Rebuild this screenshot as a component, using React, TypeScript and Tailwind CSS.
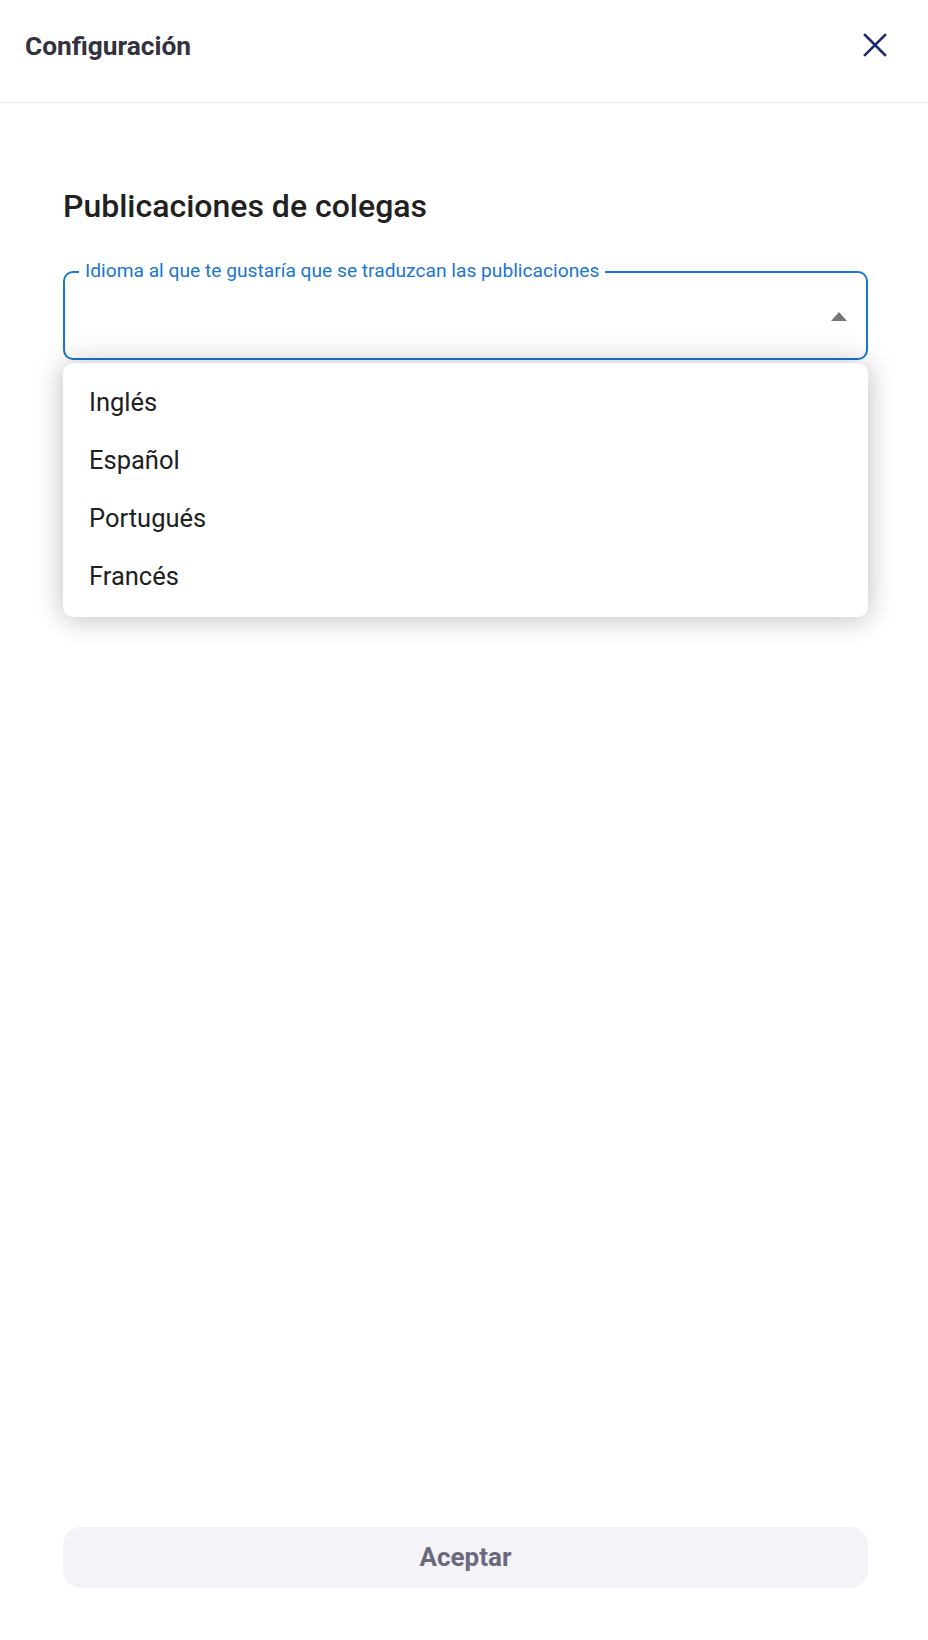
import React from "react";

export default function App() {
  const items = ["Inglés", "Español", "Portugués", "Francés"];
  return (
    <div
      className="w-[928px] h-[1640px] bg-white flex flex-col"
      style={{ fontFamily: "Roboto, 'Noto Sans', sans-serif" }}
    >
      <header className="h-[103px] shrink-0 border-b border-[#e9e9ef] flex items-center justify-between pl-[25px] pr-[41px]">
        <h1 className="text-[26.3px] font-bold text-[#33323e] leading-none -mt-[10px]">Configuración</h1>
        <button className="-mt-[13px] text-[#1f2b6f]" aria-label="Cerrar">
          <svg width="24" height="24" viewBox="0 0 24 24" fill="none" stroke="currentColor" strokeWidth="2.6" strokeLinecap="square">
            <path d="M2 2 L22 22 M22 2 L2 22" />
          </svg>
        </button>
      </header>

      <main className="flex-1 flex flex-col pl-[63px] pr-[60px]">
        <h2 className="mt-[85px] text-[32px] font-medium text-[#212121] leading-[36px]">Publicaciones de colegas</h2>

        <div className="relative mt-[47px]">
          <div className="relative h-[89px] rounded-[10px] border-[2.5px] border-[#1976d2] flex items-center justify-end pr-[19px]">
            <span className="absolute -top-[13px] left-[14px] bg-white px-[6px] text-[19.2px] leading-[22px] text-[#1976d2]">
              Idioma al que te gustaría que se traduzcan las publicaciones
            </span>
            <svg width="16" height="9" viewBox="0 0 16 9" className="mt-[2px]">
              <path d="M0 9 L8 0 L16 9 Z" fill="#757575" />
            </svg>
          </div>

          <ul className="absolute z-10 left-0 right-0 top-[92px] bg-white rounded-[10px] pt-[10px] pb-[12px] shadow-[0_-2px_30px_rgba(0,0,0,0.2),0_8px_24px_rgba(0,0,0,0.08)]">
            {items.map((it) => (
              <li key={it} className="h-[58px] flex items-center px-[26px] text-[25.5px] text-[#212121]">
                {it}
              </li>
            ))}
          </ul>
        </div>

        <div className="flex-1" />

        <button className="mb-[52px] h-[61px] rounded-[18px] bg-[#f3f3f8] text-[26px] font-bold text-[#6b6980]">
          Aceptar
        </button>
      </main>
    </div>
  );
}
